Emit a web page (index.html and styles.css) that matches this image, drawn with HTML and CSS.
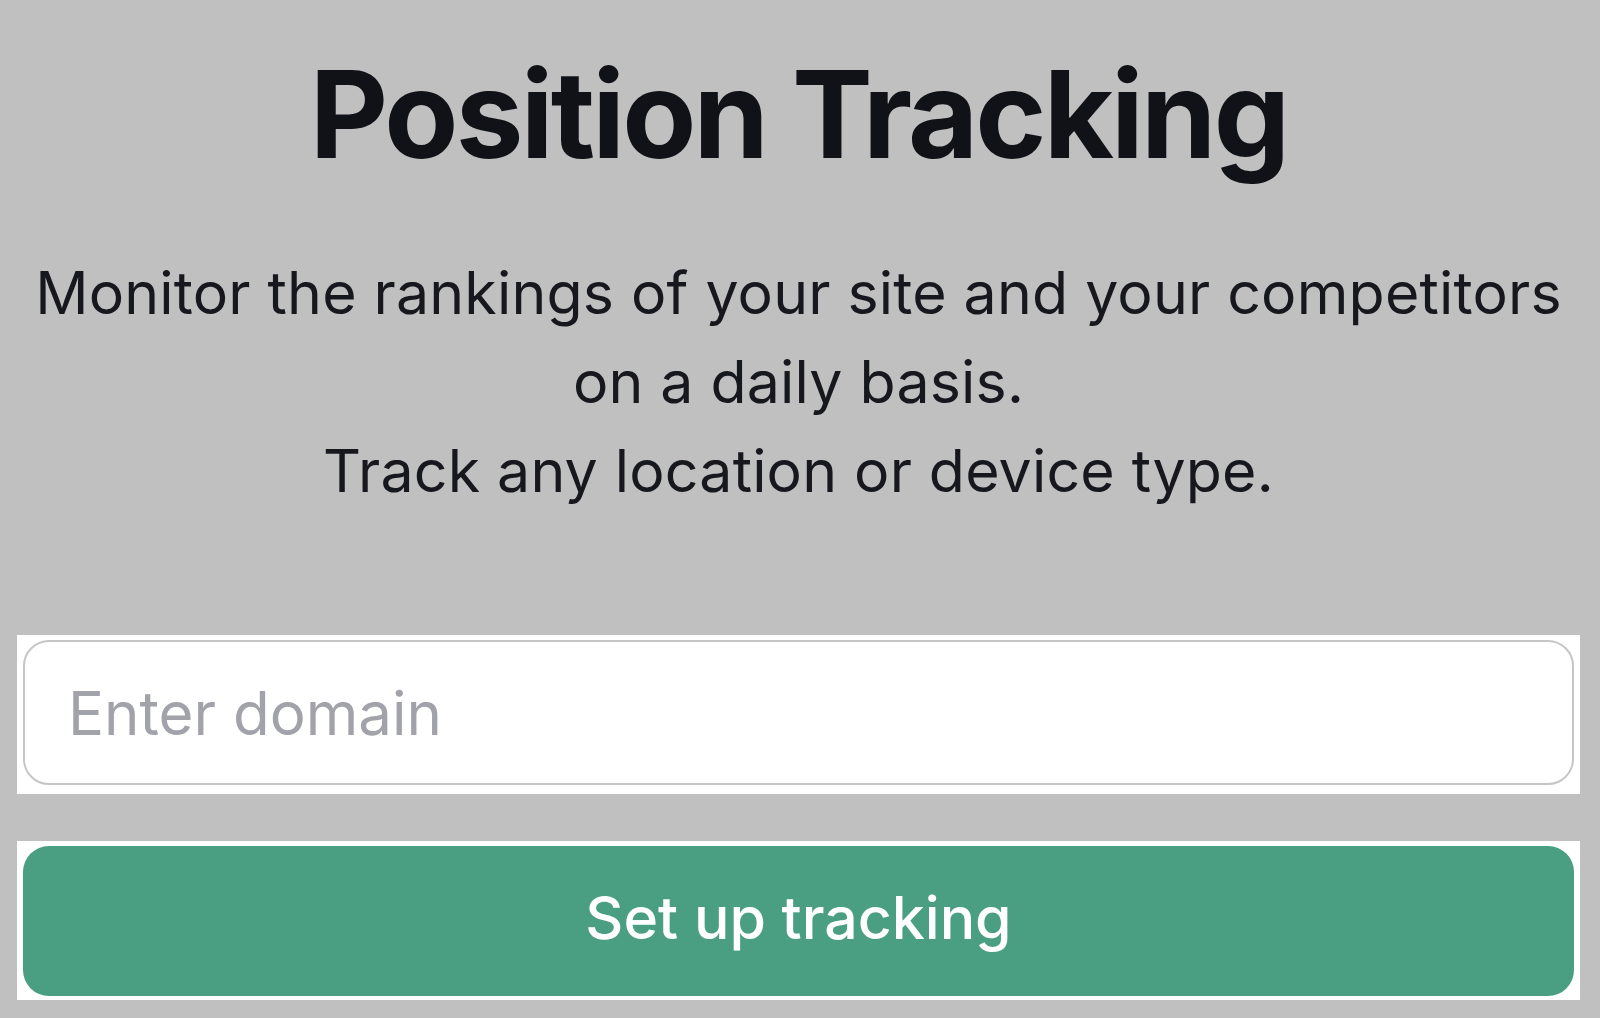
FILE: index.html
```html
<!DOCTYPE html>
<html lang="en">
<head>
<meta charset="utf-8">
<title>Position Tracking</title>
<link rel="stylesheet" href="styles.css">
</head>
<body>
<main class="page">
  <h1 class="title">Position Tracking</h1>
  <p class="lead">Monitor the rankings of your site and your competitors<br>on a daily basis.<br>Track any location or device type.</p>
  <div class="frame frame-input">
    <input class="domain" type="text" placeholder="Enter domain">
  </div>
  <div class="frame frame-button">
    <button class="cta" type="button">Set up tracking</button>
  </div>
</main>
</body>
</html>
```
FILE: styles.css
```css
html, body {
  margin: 0;
  padding: 0;
  background: #c0c0c0;
}
body {
  font-family: Inter, "Noto Sans", sans-serif;
  width: 1600px;
  height: 1018px;
  overflow: hidden;
}
.page {
  display: flex;
  flex-direction: column;
  padding: 0 20px 0 17px;
}
.title {
  margin: 40px 0 0 0;
  font-size: 121px;
  line-height: 148px;
  font-weight: 650;
  letter-spacing: -2.8px;
  color: #111217;
  text-align: center;
}
.lead {
  margin: 60px 0 0 0;
  font-size: 59px;
  line-height: 89px;
  font-weight: 400;
  letter-spacing: 0.2px;
  color: #17181d;
  text-align: center;
}
.frame {
  background: #ffffff;
  display: flex;
}
.frame-input {
  margin-top: 120px;
  padding: 5px 6px 9px 6px;
}
.frame-button {
  margin-top: 47px;
  padding: 5px 6px 4px 6px;
}
.domain {
  flex: 1;
  box-sizing: border-box;
  height: 145px;
  border: 2px solid #c6c6c8;
  border-radius: 26px;
  background: #ffffff;
  padding: 0 0 0 43px;
  font-family: Inter, "Noto Sans", sans-serif;
  font-size: 60px;
  color: #1a1b20;
  outline: none;
}
.domain::placeholder {
  color: #a2a3aa;
}
.cta {
  flex: 1;
  height: 150px;
  border: none;
  border-radius: 26px;
  background: #4a9e82;
  color: #ffffff;
  font-family: Inter, "Noto Sans", sans-serif;
  font-size: 59px;
  font-weight: 500;
  padding: 0 0 8px 0;
}
```
